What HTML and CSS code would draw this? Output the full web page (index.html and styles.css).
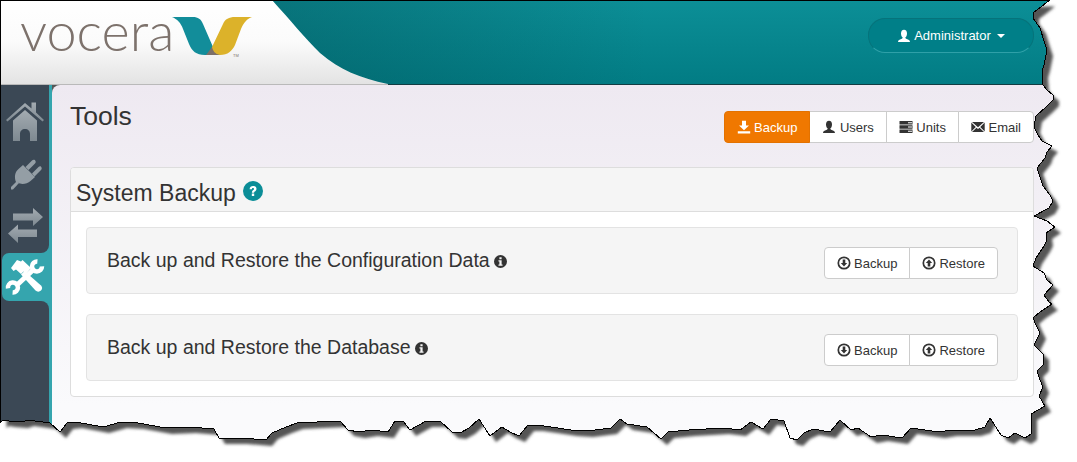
FILE: index.html
```html
<!DOCTYPE html>
<html lang="en">
<head>
<meta charset="utf-8">
<title>Vocera Tools</title>
<link rel="stylesheet" href="styles.css">
</head>
<body>
<svg class="defs" width="0" height="0" aria-hidden="true">
  <defs>
    <linearGradient id="sideGrey" x1="0" y1="0" x2="0" y2="1">
      <stop offset="0" stop-color="#a3abb1"/>
      <stop offset="1" stop-color="#7e8991"/>
    </linearGradient>
    <filter id="blur" x="-5%" y="-5%" width="110%" height="110%"><feGaussianBlur stdDeviation="1.7"/></filter>
    <path id="tear" d="M0.5 0.5L1049 0.5 1041 7 1033 13 1033 18 1040 28 1044 41 1047 50 1044 65 1042 72 1043 85 1047 90 1053 95 1053 100 1046 107 1036 116 1034 127 1038 135 1042 141 1052 146 1047 152 1045 158 1037 168 1041 180 1043 186 1050 195 1053 201 1049 208 1034 216 1047 221 1055 227 1046 233 1047 240 1044 246 1036 258 1033 266 1044 273 1047 280 1053 285 1044 295 1049 302 1052 304 1040 312 1033 318 1036 325 1040 333 1034 345 1043 354 1043 365 1037 371 1040 380 1043 387 1039 396 1045 406 1031 414 1031 434 1025 438 1015 433 1008 438 1001 435 990 418 985 427 975 430 951 430 939 432 911 428 902 438 882 435 871 437 858 428 851 430 840 420 830 432 813 429 804 433 797 440 790 438 784 421 771 419 763 429 751 422 740 430 723 428 689 430 668 432 661 439 647 427 627 424 620 419 611 428 587 431 571 430 551 427 537 425 528 425 519 436 510 432 502 427 490 436 479 419 469 428 460 433 452 432 440 421 426 421 410 430 403 421 395 421 388 432 372 430 359 432 348 430 340 421 317 422 297 423 286 427 272 433 266 440 241 438 219 438 214 429 190 427 166 428 138 423 121 422 103 427 76 422 67 423 60 432 50 423 28 420 22 422 9 421 3 420 0.5 422Z"/>
    <symbol id="i-user" viewBox="0 0 14 14"><path d="M7 .8c2 0 3 1.500 3 3.600S9 8 8.300 8.600c0 .8.400 1 1.500 1.400 1.500.6 3.200 1.200 3.200 3H1c0-1.800 1.700-2.400 3.200-3 1.100-.4 1.500-.6 1.500-1.400C5 8 4 6.500 4 4.400S5 .8 7 .8z"/></symbol>
    <symbol id="i-download" viewBox="0 0 14 14"><path d="M5 .8h4v4.700h3L7 10.200 2 5.500h3zM.8 11.200h12.400V13.400H.8z"/></symbol>
    <symbol id="i-units" viewBox="0 0 14 14"><path fill-rule="evenodd" d="M.5 1h13v3.400h-13zM.5 5.300h13v3.400h-13zM.5 9.600h13v3.400h-13zM9 2.200h4v1H9zM9 6.500h4v1H9zM9 10.800h4v1H9z"/></symbol>
    <symbol id="i-mail" viewBox="0 0 14 14"><path d="M1 2h12L7 7.300zM.3 2.600 4.800 7 .3 11.400zM13.700 2.600 9.200 7l4.500 4.400zM1 12l4.500-4.300L7 9l1.500-1.300L13 12z"/></symbol>
    <symbol id="i-cdown" viewBox="0 0 14 14"><circle cx="7" cy="7" r="5.700" fill="none" stroke="currentColor" stroke-width="1.700"/><path d="M5.700 3.400h2.600v3.500h1.900L7 10.600 3.800 6.900h1.900z"/></symbol>
    <symbol id="i-cup" viewBox="0 0 14 14"><circle cx="7" cy="7" r="5.700" fill="none" stroke="currentColor" stroke-width="1.700"/><path d="M5.700 10.600h2.600V7.100h1.900L7 3.400 3.800 7.100h1.900z"/></symbol>
    <symbol id="i-info" viewBox="0 0 14 14"><path fill-rule="evenodd" d="M7 0a7 7 0 1 1 0 14A7 7 0 0 1 7 0zM5.800 2.500v2.200h2.400V2.500zM4.800 5.700v1.400h1v3H4.800v1.400h4.400v-1.400h-1V5.700z"/></symbol>
    <symbol id="i-help" viewBox="0 0 20 20"><circle cx="10" cy="10" r="10"/><path d="M6.600 8.200C6.700 6 8.200 5 10 5c2.100 0 3.500 1.100 3.500 2.900 0 2.300-2.400 2.400-2.400 3.800H8.900c0-2.600 2.100-2.600 2.100-3.800 0-.6-.4-1-1.100-1-.7 0-1 .5-1 1.300zM8.800 12.600h2.400v2.300H8.800z" fill="#fff"/></symbol>
  </defs>
</svg>

<div class="shot">
  <svg class="tear-shadow" width="1077" height="462" aria-hidden="true"><use href="#tear" transform="translate(6 6)" fill="#555" filter="url(#blur)"/></svg>

  <div class="page">
    <header class="topbar">
      <div class="brand">
        <svg class="brand-shape" width="400" height="85" viewBox="0 0 400 85" aria-hidden="true">
          <defs>
            <linearGradient id="brandFill" x1="0" y1="0" x2="0" y2="1">
              <stop offset="0" stop-color="#fff"/>
              <stop offset=".5" stop-color="#fbfbfb"/>
              <stop offset="1" stop-color="#e3e3e3"/>
            </linearGradient>
          </defs>
          <path d="M0 0H272C290 20 305 38 320 53 340 70 360 78 388 84H0Z" fill="url(#brandFill)"/>
          <path d="M0 84.500H388" stroke="#b9b9b9" stroke-width="1"/>
        </svg>
        <div class="logo">
          <span class="wordmark">vocera</span>
          <svg class="vmark" width="82" height="42" viewBox="172 16 82 42" aria-hidden="true">
            <path d="M172 17H193C198 17 201 19 203 24L213 47C214 51 216 54 220 55H205C196 55 192 51 189 44L183 29C181 23 177 19 172 17Z" fill="#128d9a"/>
            <path d="M252 17H235C229 17 225 19 223 24L212 47C211 52 214 55 220 55 228 55 232 51 235 45L241 29C244 22 247 19 252 17Z" fill="#dcb22a"/>
            <path d="M212 47C213 51 215 54 220 55H206C208 52 210 50 212 47Z" fill="#7c6f68"/>
          </svg>
          <span class="tm">TM</span>
        </div>
      </div>
      <button class="user-pill" type="button">
        <svg class="icon"><use href="#i-user"/></svg>
        <span>Administrator</span>
        <i class="caret"></i>
      </button>
    </header>

    <div class="body">
      <nav class="side">
        <div class="side-top">
          <svg width="49" height="42" viewBox="0 101 49 42" aria-label="Home" role="img">
            <path d="M25 103 31.500 108.500V102.500H36V112.500L44 120 42.500 121.500 25 106.500 7.500 121.500 6 120Z" fill="url(#sideGrey)"/>
            <path fill-rule="evenodd" d="M25 110 37 120.500V141H30V134C30 131 28 129 25 129S20 131 20 134V141H13V120.500Z" fill="url(#sideGrey)"/>
          </svg>
          <svg width="49" height="34" viewBox="0 158 49 34" aria-label="Plugins" role="img">
            <path d="M11 187 17 181 19 183 13 189.500 11 189.500Z" fill="#949ea5"/>
            <path d="M16 182C14 177 15 172 18.500 169L23 165 35 177 30.500 181C27 184 21 185 18 182.500Z" fill="#949ea5"/>
            <path d="M25.500 167 32 160.500C33 159.500 35 159.500 35.500 161 36 162 35.500 163 35 163.500L28.500 170ZM32 173.500 38.500 167C39.500 166 41 166 41.500 167.500 42 168.500 41.500 169.500 41 170L34.500 176.500Z" fill="#949ea5"/>
          </svg>
          <svg width="49" height="38" viewBox="0 207 49 38" aria-label="Transfers" role="img">
            <path d="M13 213.500H33V208L43 217 33 226V220.500H13Z" fill="url(#sideGrey)"/>
            <path d="M37 229.500H18V224.500L8 233.500 18 243V237H37Z" fill="url(#sideGrey)"/>
          </svg>
        </div>
        <div class="side-active">
          <svg width="47" height="47" viewBox="2 253 47 47" aria-label="Tools" role="img">
            <g fill="#fff">
              <path d="M11 268 17 260 21 261.500 22.500 260 31 268 26 274 23.500 271.500 21 274 16 269.500 13.500 271Z"/>
              <path d="M21 274.500 24.500 271 41 285.500C42.500 287 42.500 289 41 290.500 39.500 292 37 292 35.500 290.500Z"/>
            </g>
            <g fill="none" stroke="#fff">
              <path d="M37.400 261.500A5 5 0 1 0 42 266.400" stroke-width="4.500"/>
              <path d="M12.600 292.500A5 5 0 1 0 8 288.400" stroke-width="4.500"/>
              <path d="M33 270 17 285" stroke-width="5"/>
            </g>
          </svg>
        </div>
        <div class="side-rest"></div>
      </nav>

      <main class="content">
        <div class="title-row">
          <h1>Tools</h1>
          <div class="btn-group">
            <a class="btn btn-on"><svg class="icon"><use href="#i-download"/></svg>Backup</a>
            <a class="btn"><svg class="icon"><use href="#i-user"/></svg>Users</a>
            <a class="btn"><svg class="icon"><use href="#i-units"/></svg>Units</a>
            <a class="btn"><svg class="icon"><use href="#i-mail"/></svg>Email</a>
          </div>
        </div>

        <section class="panel">
          <h2 class="panel-head"><span>System Backup</span><svg class="help"><use href="#i-help"/></svg></h2>
          <div class="panel-body">
            <div class="well">
              <h3>Back up and Restore the Configuration Data<svg class="info"><use href="#i-info"/></svg></h3>
              <div class="btn-group">
                <a class="btn"><svg class="icon"><use href="#i-cdown"/></svg>Backup</a>
                <a class="btn"><svg class="icon"><use href="#i-cup"/></svg>Restore</a>
              </div>
            </div>
            <div class="well">
              <h3>Back up and Restore the Database<svg class="info"><use href="#i-info"/></svg></h3>
              <div class="btn-group">
                <a class="btn"><svg class="icon"><use href="#i-cdown"/></svg>Backup</a>
                <a class="btn"><svg class="icon"><use href="#i-cup"/></svg>Restore</a>
              </div>
            </div>
          </div>
        </section>
      </main>
    </div>
  </div>

  <svg class="tear-line" width="1077" height="462" aria-hidden="true"><use href="#tear" fill="none" stroke="#000" stroke-width="1" shape-rendering="crispEdges"/></svg>
</div>
</body>
</html>
```
FILE: styles.css
```css
* { box-sizing: border-box; }

html, body {
  margin: 0;
  padding: 0;
  background: #fff;
  overflow: hidden;
}

body {
  font-family: "Liberation Sans", Arial, sans-serif;
  font-size: 13px;
  color: #333;
}

.defs { position: absolute; }

.shot {
  position: relative;
  width: 1077px;
  height: 462px;
}

.tear-shadow,
.tear-line {
  position: absolute;
  left: 0;
  top: 0;
}

.tear-line { pointer-events: none; }

.page {
  position: relative;
  display: flex;
  flex-direction: column;
  width: 1077px;
  height: 462px;
  clip-path: path("M0.5 0.5L1049 0.5 1041 7 1033 13 1033 18 1040 28 1044 41 1047 50 1044 65 1042 72 1043 85 1047 90 1053 95 1053 100 1046 107 1036 116 1034 127 1038 135 1042 141 1052 146 1047 152 1045 158 1037 168 1041 180 1043 186 1050 195 1053 201 1049 208 1034 216 1047 221 1055 227 1046 233 1047 240 1044 246 1036 258 1033 266 1044 273 1047 280 1053 285 1044 295 1049 302 1052 304 1040 312 1033 318 1036 325 1040 333 1034 345 1043 354 1043 365 1037 371 1040 380 1043 387 1039 396 1045 406 1031 414 1031 434 1025 438 1015 433 1008 438 1001 435 990 418 985 427 975 430 951 430 939 432 911 428 902 438 882 435 871 437 858 428 851 430 840 420 830 432 813 429 804 433 797 440 790 438 784 421 771 419 763 429 751 422 740 430 723 428 689 430 668 432 661 439 647 427 627 424 620 419 611 428 587 431 571 430 551 427 537 425 528 425 519 436 510 432 502 427 490 436 479 419 469 428 460 433 452 432 440 421 426 421 410 430 403 421 395 421 388 432 372 430 359 432 348 430 340 421 317 422 297 423 286 427 272 433 266 440 241 438 219 438 214 429 190 427 166 428 138 423 121 422 103 427 76 422 67 423 60 432 50 423 28 420 22 422 9 421 3 420 0.5 422Z");
}

/* Top bar */
.topbar {
  flex: none;
  display: flex;
  justify-content: space-between;
  align-items: flex-start;
  height: 85px;
  border-bottom: 1px solid #123c42;
  background:
    linear-gradient(90deg, rgba(4, 80, 86, .42) 25%, rgba(4, 80, 86, 0) 60%),
    linear-gradient(180deg, #0c8f97, #027c84);
}

.brand {
  position: relative;
  width: 400px;
  height: 85px;
}

.brand-shape {
  position: absolute;
  left: 0;
  top: 0;
}

.logo {
  position: relative;
  display: flex;
  align-items: flex-start;
  padding: 9px 0 0 20px;
}

.wordmark {
  width: 152px;
  font-family: Lato, "Liberation Sans", sans-serif;
  font-weight: 300;
  font-size: 54px;
  line-height: 44px;
  color: #7d726c;
}

.vmark {
  flex: none;
  margin-top: 7px;
}

.tm {
  font-size: 4px;
  line-height: 5px;
  margin: 44px 0 0 -21px;
  color: #7d726c;
}

.user-pill {
  display: flex;
  align-items: center;
  justify-content: center;
  gap: 3px;
  width: 166px;
  height: 35px;
  margin: 18px 43px 0 0;
  padding: 0;
  border: 1px solid #06737b;
  border-bottom-color: #2fa0a8;
  border-radius: 17px;
  background: #007f88;
  color: #fff;
  font: inherit;
}

.user-pill .icon { fill: #fff; }

.caret {
  width: 0;
  height: 0;
  margin-left: 3px;
  border-top: 4px solid #fff;
  border-left: 4px solid transparent;
  border-right: 4px solid transparent;
}

/* Sidebar */
.body {
  flex: 1;
  display: flex;
  min-height: 0;
}

.side {
  flex: none;
  display: flex;
  flex-direction: column;
  width: 52px;
  background: linear-gradient(90deg, #3b4855 30px, #35a5ae 30px);
}

.side-top {
  display: flex;
  flex-direction: column;
  gap: 15px;
  width: 49px;
  height: 168px;
  padding-top: 16px;
  background: #3b4855;
  border-bottom-right-radius: 8px;
}

.side-top svg,
.side-active svg { display: block; }

.side-active {
  width: 50px;
  height: 48px;
  margin-left: 2px;
  background: #35a5ae;
  border-radius: 7px 0 0 7px;
}

.side-rest {
  flex: 1;
  width: 49px;
  background: #3b4855;
  border-top-right-radius: 8px;
}

/* Content */
.content {
  flex: 1;
  min-width: 0;
  padding: 17px 43px 0 18px;
  border-top-left-radius: 8px;
  background: linear-gradient(180deg, #eee9f1, #fafafc 85%);
}

.title-row {
  display: flex;
  justify-content: space-between;
  align-items: flex-start;
  height: 65px;
}

h1 {
  margin: 0;
  font-size: 26.5px;
  font-weight: 400;
  line-height: 28px;
  color: #333;
}

.title-row .btn-group { margin-top: 9px; }

.btn-group {
  display: flex;
  flex: none;
}

.btn {
  display: flex;
  align-items: center;
  gap: 3.5px;
  height: 32px;
  padding: 0 12px;
  margin-left: -1px;
  border: 1px solid #ccc;
  background: #fff;
  color: #333;
  white-space: nowrap;
}

.btn:first-child {
  margin-left: 0;
  border-radius: 4px 0 0 4px;
}

.btn:last-child { border-radius: 0 4px 4px 0; }

.btn-on {
  position: relative;
  background: #f07800;
  border-color: #e37200;
  color: #fff;
}

.icon {
  flex: none;
  width: 14px;
  height: 14px;
  fill: currentColor;
}

.panel {
  border: 1px solid #ddd;
  border-radius: 4px;
  background: #fff;
  overflow: hidden;
}

.panel-head {
  display: flex;
  align-items: center;
  gap: 7px;
  height: 44px;
  margin: 0;
  padding: 7px 0 0 5px;
  border-bottom: 1px solid #ddd;
  background: #f5f5f5;
  font-size: 23px;
  font-weight: 400;
  color: #333;
}

.help {
  width: 20px;
  height: 20px;
  margin-top: -4px;
  fill: #0b8d97;
}

.panel-body {
  display: flex;
  flex-direction: column;
  gap: 20px;
  padding: 15px;
}

.well {
  display: flex;
  justify-content: space-between;
  align-items: center;
  height: 67px;
  padding: 0 19px 0 20px;
  border: 1px solid #e3e3e3;
  border-radius: 4px;
  background: #f5f5f5;
}

.well .btn-group { margin-top: 5px; }

.well .btn { gap: 3px; }

.well h3 {
  display: flex;
  align-items: center;
  gap: 4px;
  margin: 0;
  font-size: 19.5px;
  font-weight: 400;
  color: #333;
}

.info {
  width: 13px;
  height: 13px;
  margin-top: 2px;
  fill: #333;
}
```
